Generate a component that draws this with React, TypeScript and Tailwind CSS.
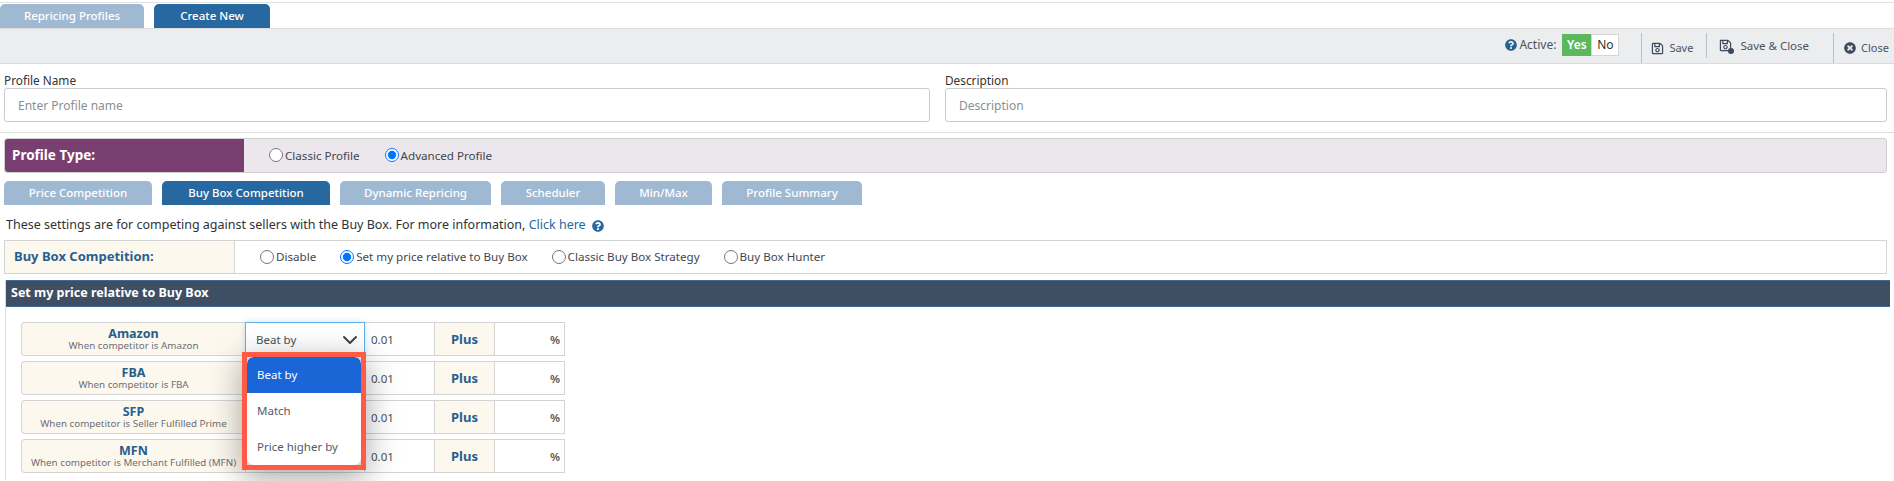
import { FaQuestionCircle, FaRegSave, FaTimesCircle } from "react-icons/fa";
import { LuChevronDown } from "react-icons/lu";

const subTabs = [
  { label: "Price Competition", w: "w-[148px]" },
  { label: "Buy Box Competition", w: "w-[168px]", active: true },
  { label: "Dynamic Repricing", w: "w-[151px]" },
  { label: "Scheduler", w: "w-[104px]" },
  { label: "Min/Max", w: "w-[97px]" },
  { label: "Profile Summary", w: "w-[140px]" },
];

const rows = [
  { name: "Amazon", sub: "When competitor is Amazon" },
  { name: "FBA", sub: "When competitor is FBA" },
  { name: "SFP", sub: "When competitor is Seller Fulfilled Prime" },
  { name: "MFN", sub: "When competitor is Merchant Fulfilled (MFN)" },
];

function Radio({ label, group, checked }: { label: string; group: string; checked?: boolean }) {
  return (
    <label className="flex items-center gap-[2px] text-[11.6px] text-[#3f4650]">
      <input type="radio" name={group} defaultChecked={checked} className="m-0 size-[14px]" />
      <span>{label}</span>
    </label>
  );
}

export default function App() {
  return (
    <div className="relative h-[481px] w-full overflow-hidden bg-white font-['Noto_Sans',sans-serif] text-[12px] text-[#333]">
      {/* Top tabs */}
      <div className="mt-[2px] flex h-[26px] gap-[10px] border-t border-[#e2e2e2] pt-px">
        <div className="flex w-[144px] items-center justify-center rounded-t-[5px] bg-[#9fb9d3] text-[11.5px] font-medium text-white">
          Repricing Profiles
        </div>
        <div className="flex w-[116px] items-center justify-center rounded-t-[5px] bg-[#26689f] text-[11.5px] font-medium text-white">
          Create New
        </div>
      </div>

      {/* Toolbar */}
      <div className="flex h-[36px] items-start justify-end border-y border-[#dcdcdc] bg-[#ecedef] pr-[5px] text-[#4a5460]">
        <div className="mt-[5px] flex items-center">
          <FaQuestionCircle className="mr-[2px] size-[12px] text-[#1f6391]" />
          <span className="text-[12px]">Active:</span>
          <div className="ml-[6px] flex h-[22px] text-[12px]">
            <span className="flex w-[29px] items-center justify-center bg-[#5cb85c] font-semibold text-white">Yes</span>
            <span className="flex w-[28px] items-center justify-center border border-[#d6d6d6] bg-white text-[#333]">No</span>
          </div>
        </div>
        <div className="mt-[4px] ml-[22px] flex h-[30px] items-center gap-[5px] border-l border-[#b9c0c8] pl-[9px]">
          <FaRegSave className="size-[13px] text-[#3d4a5c]" />
          <span className="text-[11px]">Save</span>
        </div>
        <div className="mt-[4px] ml-[13px] flex h-[25px] items-center gap-[8px] border-l border-[#b9c0c8] pl-[12px]">
          <span className="relative">
            <FaRegSave className="size-[13px] text-[#3d4a5c]" />
            <span className="absolute -right-[2px] -bottom-[2px] size-[6px] rounded-full bg-[#3d4a5c]" />
          </span>
          <span className="text-[11.5px]">Save &amp; Close</span>
        </div>
        <div className="mt-[4px] ml-[24px] flex h-[30px] items-center gap-[5px] border-l border-[#b9c0c8] pl-[10px]">
          <FaTimesCircle className="size-[12px] text-[#3d4a5c]" />
          <span className="text-[11px]">Close</span>
        </div>
      </div>

      {/* Name & Description */}
      <div className="mt-[7px] flex gap-[15px] pr-[7px] pl-[4px]">
        <div className="w-[926px]">
          <div className="mb-[1px] h-[16px] pt-px text-[11.8px] leading-[16px] text-[#333]">Profile Name</div>
          <input
            placeholder="Enter Profile name"
            className="h-[34px] w-full rounded-[3px] border border-[#ccc] px-[13px] text-[12px] placeholder:text-[#8a8f95]"
          />
        </div>
        <div className="flex-1">
          <div className="mb-[1px] h-[16px] pt-px text-[11.8px] leading-[16px] text-[#333]">Description</div>
          <input
            placeholder="Description"
            className="h-[34px] w-full rounded-[3px] border border-[#ccc] px-[13px] text-[12px] placeholder:text-[#8a8f95]"
          />
        </div>
      </div>

      <div className="mt-[10px] border-t border-[#dedede]" />

      {/* Profile type */}
      <div className="mt-[5px] mr-[7px] ml-[4px] flex h-[35px] rounded-[3px] border border-[#cfcfcf] bg-[#ece6ed]">
        <div className="flex w-[239px] items-center rounded-l-[3px] bg-[#783f70] pl-[7px] text-[13.5px] font-bold text-white">
          Profile Type:
        </div>
        <div className="flex items-center gap-[25px] pl-[25px]">
          <Radio group="type" label="Classic Profile" />
          <Radio group="type" label="Advanced Profile" checked />
        </div>
      </div>

      {/* Sub tabs */}
      <div className="mt-[8px] flex h-[24px] gap-[10px] pl-[4px]">
        {subTabs.map((t) => (
          <div
            key={t.label}
            className={`flex items-center justify-center rounded-t-[5px] text-[11.5px] font-medium text-white ${t.w} ${
              t.active ? "bg-[#26689f]" : "bg-[#9fb9d3]"
            }`}
          >
            {t.label}
          </div>
        ))}
      </div>

      {/* Info */}
      <div className="mt-[12px] flex h-[17px] items-center pl-[6px] text-[12.5px] text-[#2e3338]">
        <span>These settings are for competing against sellers with the Buy Box. For more information,&nbsp;</span>
        <span className="text-[#26689f]">Click here</span>
        <FaQuestionCircle className="ml-[6px] size-[12px] text-[#26689f]" />
      </div>

      {/* Buy box competition */}
      <div className="mt-[6px] mr-[7px] ml-[4px] flex h-[34px] border border-[#d4d4d4]">
        <div className="flex w-[230px] items-center border-r border-[#d4d4d4] bg-[#fdf8ee] pl-[9px] text-[13px] font-bold text-[#26608f]">
          Buy Box Competition:
        </div>
        <div className="flex items-center gap-[24px] pl-[25px]">
          <Radio group="bb" label="Disable" />
          <Radio group="bb" label="Set my price relative to Buy Box" checked />
          <Radio group="bb" label="Classic Buy Box Strategy" />
          <Radio group="bb" label="Buy Box Hunter" />
        </div>
      </div>

      {/* Section */}
      <div className="mt-[6px] mr-[4px] ml-[5px] h-[200px] border-l border-[#dcdcdc]">
        <div className="flex h-[27px] items-center border-t border-b border-[#3e6a95] bg-[#3e4e63] pb-px pl-[5px] text-[12.5px] font-bold text-white">
          Set my price relative to Buy Box
        </div>
        <div className="mt-[15px] flex flex-col gap-[5px] pl-[15px]">
          {rows.map((r) => (
            <div key={r.name} className="flex h-[34px] w-[544px]">
              <div className="flex w-[224px] flex-col items-center justify-center rounded-l-[4px] border border-r-0 border-[#d4d4d4] bg-[#fdf8ee] pt-px leading-none">
                <span className="text-[12.5px] leading-[12px] font-bold text-[#26608f]">{r.name}</span>
                <span className="text-[9.8px] leading-[11px] whitespace-nowrap text-[#6b6f75]">{r.sub}</span>
              </div>
              <div className="w-[120px] border border-[#d4d4d4] bg-white" />
              <div className="flex w-[69px] items-center border-y border-[#d4d4d4] pt-px pl-[6px] text-[11.5px] text-[#4a4f55]">0.01</div>
              <div className="flex w-[61px] items-center justify-center border border-[#d4d4d4] bg-[#fdf8ee] pt-px text-[13px] font-bold text-[#26608f]">
                Plus
              </div>
              <div className="flex w-[70px] items-center justify-end border-y border-r border-[#d4d4d4] pt-px pr-[4px] text-[11.5px] font-semibold text-[#555]">%</div>
            </div>
          ))}
        </div>
      </div>

      {/* Open select */}
      <div className="absolute top-[322px] left-[245px] flex h-[34px] w-[120px] items-center justify-between border border-[#63ade8] bg-white pr-[2px] pl-[10px] text-[11.5px] text-[#4a4f55] shadow-[0_0_6px_rgba(99,173,232,0.35)]">
        <span className="pt-px">Beat by</span>
        <LuChevronDown className="mt-px size-[24px] text-[#444]" strokeWidth={2} />
      </div>

      {/* Dropdown in red highlight */}
      <div className="absolute top-[352px] left-[242px] h-[118px] w-[124px] border-[5px] border-[#ff5a45] bg-[#d9d9d9] shadow-[0_8px_30px_rgba(0,0,0,0.35)]">
        <div className="flex h-full w-full flex-col overflow-hidden rounded-[7px] bg-white text-[11.5px] text-[#555a66]">
          <div className="flex h-[36px] items-center bg-[#1a66d6] pl-[10px] text-white">Beat by</div>
          <div className="flex h-[36px] items-center pl-[10px]">Match</div>
          <div className="flex h-[36px] items-center pl-[10px]">Price higher by</div>
        </div>
      </div>
    </div>
  );
}
